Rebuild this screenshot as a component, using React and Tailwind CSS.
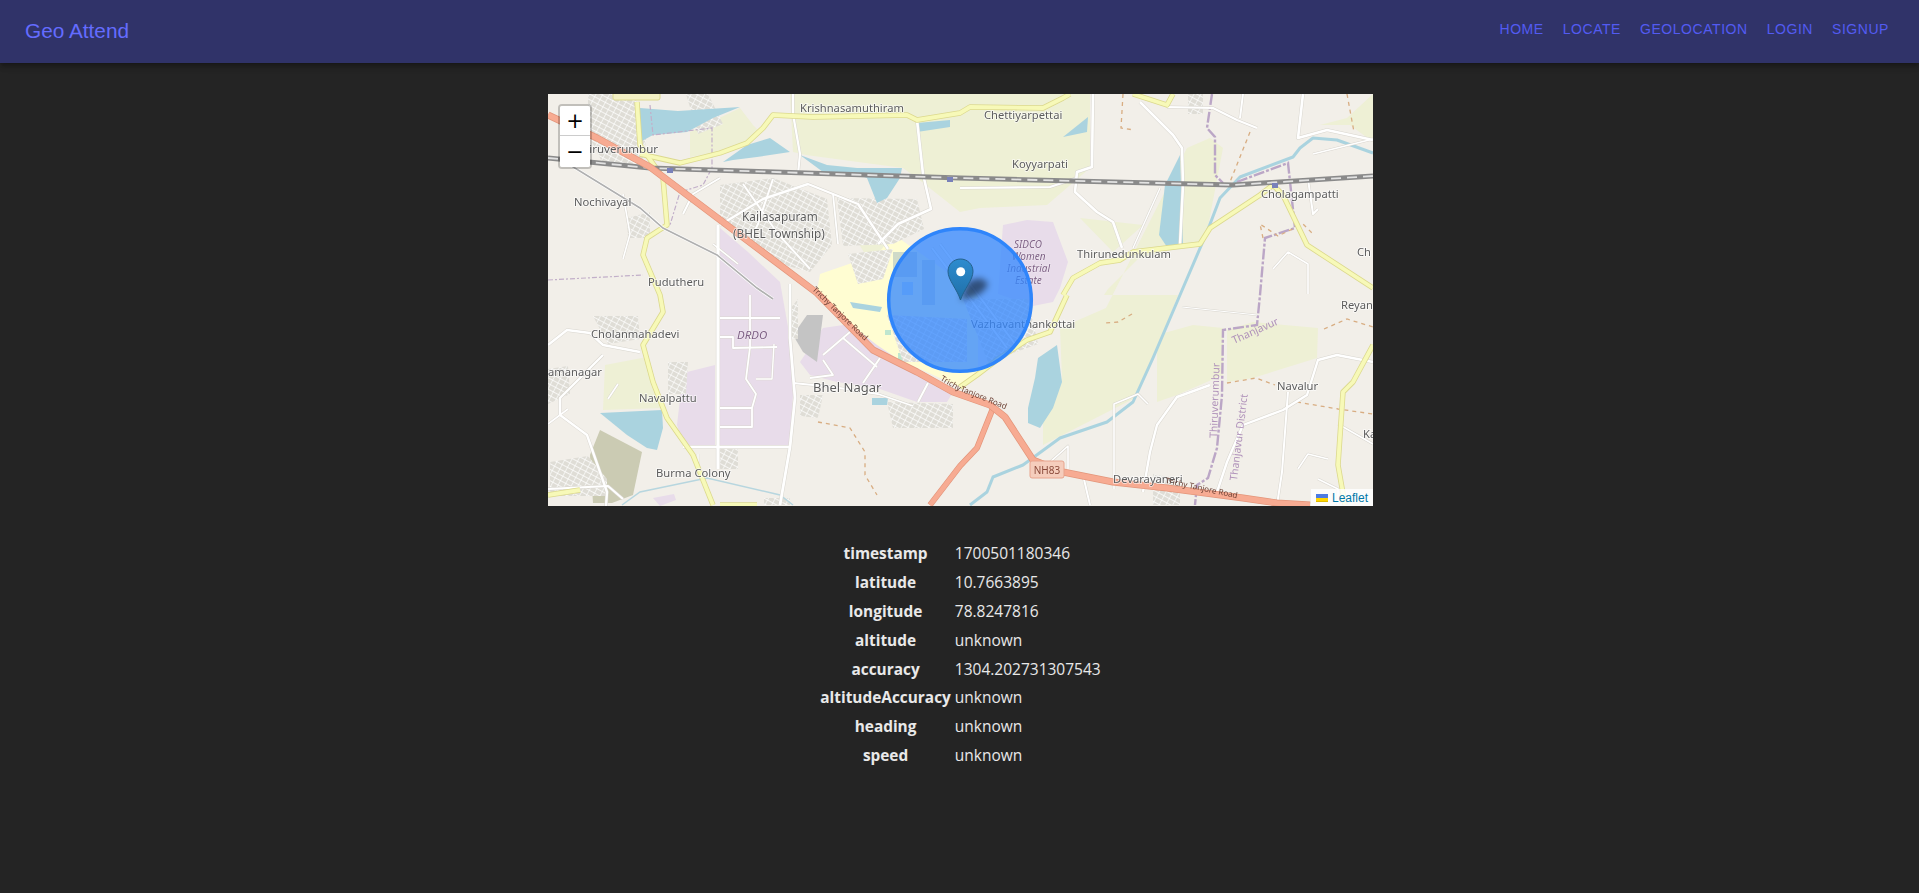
const water = [
  '92,14 130,17 192,13 165,24 139,38 105,41 92,48 90,30',
  '175,68 199,51 222,44 242,58 209,63 185,66',
  '252,61 279,71 309,74 354,74 352,84 339,104 329,109 319,84 305,79 275,78',
  '369,29 402,26 402,33 369,38',
  '515,43 540,23 539,38',
  '632,61 635,151 619,153 611,141 617,91',
  '509,251 514,288 505,314 492,334 480,329 480,314 487,284 490,264',
  '52,319 114,316 115,334 109,356 99,354 79,341',
  '324,304 340,304 339,311 324,311',
  '302,208 334,213 332,218 305,214',
];

const fields = [
  '242,0 245,58 258,61 355,74 369,84 369,0',
  '369,0 412,0 542,0 542,74 499,111 432,114 412,118 369,84',
  '142,38 192,14 205,31 212,38 192,54 142,63',
  '639,54 662,44 675,54 659,138 652,148 590,165 560,195 556,201 630,201 605,264 585,305 495,351 495,315 514,284 512,234 558,214',
  '532,124 595,131 565,158',
  '609,241 645,231 675,234 675,281 629,301 609,308',
  '679,236 705,228 770,234 769,264 705,284 679,288',
  '57,271 99,263 109,294 115,314 55,316',
  '772,31 799,24 825,0 825,48 802,31',
  '320,108 345,125 350,150 320,165 305,140',
];

const purple = [
  '135,279 167,271 167,351 135,351 129,331',
  '172,134 200,158 232,188 242,244 245,301 242,351 172,351',
  '275,234 302,230 329,251 369,278 405,298 399,308 369,308 329,294 289,288 262,281 252,268',
  '455,131 479,126 505,128 520,168 512,194 505,208 485,212 450,200',
  '112,412 128,406 126,400 105,404',
];

const builtUp = [
  '172,91 225,84 279,105 284,151 262,178 240,172 200,150 172,130',
  '289,104 369,105 376,135 345,150 295,152',
  '40,0 85,0 100,30 95,70 55,70 40,40',
  '2,368 40,362 59,385 59,402 2,402',
  '339,308 405,310 405,334 345,334',
  '252,301 275,301 270,324 252,322',
  '79,124 102,118 102,144 80,144',
  '138,0 160,0 175,30 150,40',
  '300,160 345,155 335,185 310,190',
  '640,0 655,0 655,20 640,20',
  '0,275 20,272 22,300 0,310',
  '45,222 90,222 92,245 60,250',
  '120,268 140,268 138,300 120,300',
  '216,404 242,404 242,411 216,411',
  '339,221 419,225 419,268 355,268',
  '415,205 480,205 490,250 440,268',
  '242,215 250,205 250,245 242,245',
  '172,355 190,355 190,375 172,375',
  '605,380 632,385 632,411 605,411',
];

const whiteRoads = [
  [2.6, '545,0 544,73 529,78 527,98 549,118 565,128 574,154'],
  [2.6, '592,8 625,41 634,54 635,91 632,151'],
  [2.2, '619,13 665,14 689,26 709,34'],
  [2, '695,0 692,24'],
  [2.6, '755,0 750,44 779,36 825,46'],
  [2.2, '412,94 502,93 529,84'],
  [2.4, '825,268 789,261 770,266 759,301 735,316 695,331 679,368 669,398'],
  [2, '740,298 734,378 729,411'],
  [2.4, '662,291 629,303 609,331 602,358 595,398'],
  [2, '535,381 542,411'],
  [3.2, '170,131 170,375'],
  [2.6, '135,353 242,353'],
  [2.8, '242,190 242,244 247,304 242,353 232,411'],
  [1.8, '172,224 232,224'],
  [1.8, '172,243 185,243 185,254 229,253'],
  [1.8, '245,289 285,293 330,300 365,312'],
  [1.8, '172,314 204,314 204,333 172,333'],
  [1.8, '202,201 202,253 198,285 208,300 204,314'],
  [1.4, '226,250 224,285 208,285'],
  [2.4, '0,251 19,236 42,239 55,251 92,258'],
  [2.4, '55,261 12,304 12,321 39,341 59,398 58,412'],
  [2.2, '245,0 245,20 252,60 250,80'],
  [2.6, '369,26 375,80 383,115 350,130 330,150'],
  [2.4, '172,131 215,105 260,90 310,110 340,155'],
  [2, '332,264 315,289'],
  [2, '380,289 370,308'],
  [1.8, '275,266 285,281 262,284'],
  [1.8, '295,244 329,273'],
  [1.8, '275,261 302,238'],
  [2, '172,84 145,100 135,120'],
  [2, '760,85 765,120 770,115'],
  [2.2, '0,395 60,392 75,405'],
  [1.4, '612,94 585,154'],
  [1.2, '634,213 709,221'],
  [1.6, '790,411 790,395 770,385'],
  [1.6, '790,330 825,350'],
  [1.6, '765,60 825,45'],
  [1.6, '600,310 590,300 566,310 566,395'],
  [1.6, '725,175 740,158 760,170 760,200'],
  [2, '195,90 230,140 262,175'],
  [2, '225,85 210,130 200,150'],
  [1.8, '285,100 290,150'],
  [1.6, '165,150 190,170'],
  [2, '384,154 459,254'],
  [2, '392,150 467,250'],
  [1.6, '75,100 82,140 75,165'],
  [1.6, '0,330 20,315'],
  [1.6, '70,290 60,305'],
  [1.6, '500,370 520,352 520,375'],
  [1.6, '780,365 760,360 750,375'],
  [1.4, '150,360 150,372'],
];

const yellowRoads = [
  '89,8 92,51 115,84 119,131 99,144 95,161 112,201 115,218 95,251 105,288 119,324 145,361 165,411',
  '92,60 132,69 172,59 199,49 215,34 225,21 265,23 359,21 369,26 412,19 422,13 495,14 515,4 522,0',
  '585,0 619,11 625,0',
  '515,201 525,184 552,169 572,166 585,158 652,150 662,134 712,101 725,91 735,101 759,151 825,194',
  '519,201 502,238 479,246 450,265 429,281 412,293',
  '825,251 805,288 795,298 790,371 797,411',
  '0,401 32,396',
  '172,411 209,411',
];

const boundaries = [
  '664,0 659,34 667,43 667,81 675,89',
  '689,88 740,69 747,134 717,144 712,201 709,231 675,236 674,301 669,354 660,384 649,391 647,411',
];
const thinBoundaries = [
  '102,11 105,41 164,34 164,74 155,91 132,98 122,131',
  '0,186 95,181',
];

const tracks = [
  '270,328 302,334 317,358 317,381 329,401',
  '702,38 682,88',
  '575,0 573,34 586,36',
  '799,0 806,38',
  '679,289 708,284 727,291',
  '749,308 790,315 825,320',
  '776,235 799,225 825,233',
  '584,220 570,228 556,229',
  '715,144 712,130 730,142 755,130 765,140',
];

const labels = [
  { t: 'Thiruverumbur', x: 110, y: 59, anchor: 'end', size: 11.5 },
  { t: 'Nochivayal', x: 26, y: 112, size: 11.2 },
  { t: 'Kailasapuram', x: 194, y: 127, size: 11.8 },
  { t: '(BHEL Township)', x: 185, y: 144, size: 11.8 },
  { t: 'Krishnasamuthiram', x: 252, y: 18, size: 11.2 },
  { t: 'Chettiyarpettai', x: 436, y: 25, size: 11.2 },
  { t: 'Koyyarpati', x: 464, y: 74, size: 11.2 },
  { t: 'Cholagampatti', x: 713, y: 104, size: 11.2 },
  { t: 'Thirunedunkulam', x: 529, y: 164, size: 11.2 },
  { t: 'Pudutheru', x: 100, y: 192, size: 11.2 },
  { t: 'Cholanmahadevi', x: 43, y: 244, size: 11.2 },
  { t: 'amanagar', x: 0, y: 282, size: 11.2 },
  { t: 'Navalpattu', x: 91, y: 308, size: 11.2 },
  { t: 'Bhel Nagar', x: 265, y: 298, size: 13 },
  { t: 'Burma Colony', x: 108, y: 383, size: 11.2 },
  { t: 'Vazhavanthankottai', x: 423, y: 234, size: 11.2 },
  { t: 'Devarayaneri', x: 565, y: 389, size: 11.2 },
  { t: 'Navalur', x: 729, y: 296, size: 11.2 },
  { t: 'Reyan', x: 793, y: 215, size: 11.2 },
  { t: 'Ch', x: 809, y: 162, size: 11.2 },
  { t: 'Ka', x: 815, y: 344, size: 11.2 },
];

const purpleLabels = [
  { t: 'DRDO', x: 189, y: 245, size: 11.5 },
  { t: 'SIDCO', x: 466, y: 154, size: 10 },
  { t: 'Women', x: 464, y: 166, size: 10 },
  { t: 'Industrial', x: 459, y: 178, size: 10 },
  { t: 'Estate', x: 467, y: 190, size: 10 },
];

const geo = [
  ['timestamp', '1700501180346'],
  ['latitude', '10.7663895'],
  ['longitude', '78.8247816'],
  ['altitude', 'unknown'],
  ['accuracy', '1304.202731307543'],
  ['altitudeAccuracy', 'unknown'],
  ['heading', 'unknown'],
  ['speed', 'unknown'],
];

const navItems = ['Home', 'Locate', 'Geolocation', 'Login', 'Signup'];

const mapFont = '"Noto Sans", sans-serif';
const trunk = '0,21 49,44 102,73 269,199 325,256 369,278 405,298 442,311 457,323 485,366 515,378 565,388 619,394 695,404 729,409 762,411';
const trunkBranch = '445,314 429,354 412,372 382,411';
const railway = '0,64 102,74 412,84 685,91 825,82';
const sideRail = '22,71 92,114 115,134 169,161 209,194 225,205';

function MapArt() {
  return (
    <svg viewBox="0 0 825 412" className="block w-full h-full">
      <defs>
        <filter id="tile" x="0" y="0" width="100%" height="100%">
          <feGaussianBlur stdDeviation="0.5" />
        </filter>
        <filter id="shadow" x="-50%" y="-50%" width="200%" height="200%">
          <feGaussianBlur stdDeviation="3" />
        </filter>
        <pattern id="streets" width="6" height="5" patternUnits="userSpaceOnUse" patternTransform="rotate(28)">
          <rect width="6" height="5" fill="#dfddd6" />
          <path d="M0 0H6M0 0V5" stroke="#ffffff" strokeWidth="1.3" fill="none" />
        </pattern>
        <linearGradient id="pin" x1="0" y1="0" x2="0" y2="1">
          <stop offset="0" stopColor="#2e8ccf" />
          <stop offset="1" stopColor="#1f6fa8" />
        </linearGradient>
      </defs>

      <g filter="url(#tile)">
        <rect width="825" height="412" fill="#f2efe9" />
        {fields.map((p) => <polygon key={p} points={p} fill="#eef0d5" />)}
        <polygon points="272,180 330,160 345,140 430,200 430,280 412,293 372,275 325,255 269,197" fill="#fffdd2" />
        <rect x="345" y="158" width="24" height="25" fill="#cfdac8" />
        <rect x="374" y="166" width="13" height="45" fill="#cfdac8" />
        <rect x="337" y="236" width="6" height="5" fill="#bfe6cf" />
        <rect x="350" y="259" width="8" height="9" fill="#bfe6cf" />
        {purple.map((p) => <polygon key={p} points={p} fill="#e8dcea" />)}
        <polygon points="42,361 52,336 94,358 85,401 64,409 45,409" fill="#cbcbb3" />
        <polygon points="245,241 259,221 275,221 269,268 255,258" fill="#c4c4c4" />
        <rect x="62" y="40" width="10" height="9" fill="#c9c9c9" />
        {builtUp.map((p) => <polygon key={p} points={p} fill="url(#streets)" />)}
        {water.map((p) => <polygon key={p} points={p} fill="#aad3df" />)}
        <rect x="354" y="188" width="11" height="13" fill="#c3dde5" />
        <polyline points="825,59 789,46 765,44 752,54 745,63 692,83 672,104 659,138 632,201 605,264 585,308 559,328 512,344 475,371 445,383 439,398 422,411" fill="none" stroke="#aad3df" strokeWidth="3" strokeLinejoin="round" />
        <polyline points="74,411 92,398 159,384 232,401 245,411" fill="none" stroke="#b7d6df" strokeWidth="1.5" />

        {boundaries.map((p) => <polyline key={p} points={p} fill="none" stroke="#bba6c6" strokeWidth="2.4" strokeDasharray="11 2 3 2" />)}
        {thinBoundaries.map((p) => <polyline key={p} points={p} fill="none" stroke="#c2afc9" strokeWidth="1.2" strokeDasharray="5 2 2 2" />)}
        {tracks.map((p) => <polyline key={p} points={p} fill="none" stroke="#d8ad82" strokeWidth="1.3" strokeDasharray="4 4" />)}

        {whiteRoads.map(([w, p]) => <polyline key={p} points={p} fill="none" stroke="#d9d6cf" strokeWidth={w + 1} strokeLinejoin="round" />)}
        {whiteRoads.map(([w, p]) => <polyline key={p} points={p} fill="none" stroke="#ffffff" strokeWidth={w} strokeLinejoin="round" />)}

        {yellowRoads.map((p) => <polyline key={p} points={p} fill="none" stroke="#dcd98e" strokeWidth="5.4" strokeLinejoin="round" />)}
        {yellowRoads.map((p) => <polyline key={p} points={p} fill="none" stroke="#f7f9b8" strokeWidth="3.8" strokeLinejoin="round" />)}

        <polyline points={sideRail} fill="none" stroke="#ffffff" strokeWidth="3" />
        <polyline points={sideRail} fill="none" stroke="#b0b0b0" strokeWidth="1.6" />
        <polyline points={railway} fill="none" stroke="#8a8a8a" strokeWidth="5" />
        <polyline points={railway} fill="none" stroke="#e2e2e2" strokeWidth="1.8" strokeDasharray="10 6" />
        <rect x="119" y="74" width="6" height="5" fill="#7981b9" />
        <rect x="399" y="83" width="6" height="5" fill="#7981b9" />
        <rect x="724" y="89" width="6" height="5" fill="#7981b9" />

        <polyline points={trunkBranch} fill="none" stroke="#e3957a" strokeWidth="6" strokeLinejoin="round" />
        <polyline points={trunkBranch} fill="none" stroke="#f7ab92" strokeWidth="4.6" strokeLinejoin="round" />
        <polyline points={trunk} fill="none" stroke="#e3957a" strokeWidth="7" strokeLinejoin="round" />
        <polyline points={trunk} fill="none" stroke="#f7ab92" strokeWidth="5.6" strokeLinejoin="round" />

        <rect x="65" y="-4" width="47" height="10" rx="2" fill="#f3f0c4" stroke="#dcd98e" />
        <rect x="482" y="367" width="34" height="17" rx="2" fill="#f5cdbc" stroke="#e8a48d" />
        <text x="499" y="379.5" textAnchor="middle" fontSize="10" fontFamily={mapFont} fill="#8a4a3a">NH83</text>

        <g fontFamily={mapFont} fill="#5c5c5c" stroke="#ffffff" strokeOpacity="0.7" strokeWidth="1.6" paintOrder="stroke">
          {labels.map((l) => (
            <text key={l.t} x={l.x} y={l.y} fontSize={l.size} textAnchor={l.anchor || 'start'}>{l.t}</text>
          ))}
        </g>
        <g fontFamily={mapFont} fontStyle="italic" fill="#7d5f84" stroke="#ffffff" strokeOpacity="0.4" strokeWidth="1" paintOrder="stroke">
          {purpleLabels.map((l) => (
            <text key={l.t} x={l.x} y={l.y} fontSize={l.size}>{l.t}</text>
          ))}
        </g>
        <g fontFamily={mapFont} fill="#b092ba" fontSize="10.5">
          <text transform="translate(686 250) rotate(-24)">Thanjavur</text>
          <text transform="translate(669 344) rotate(-88)">Thiruverumbur</text>
          <text transform="translate(689 387) rotate(-83)">Thanjavur District</text>
        </g>
        <g fontFamily={mapFont} fill="#6b3f33" fontSize="8">
          <text transform="translate(264 196) rotate(44)">Trichy Tanjore Road</text>
          <text transform="translate(412 297) rotate(22)">Tanjore Road</text>
          <text transform="translate(617 389) rotate(12)">Trichy Tanjore Road</text>
          <text transform="translate(392 286) rotate(30)">Trichy</text>
        </g>
      </g>

      <circle cx="412" cy="206" r="71.3" fill="#3388ff" fillOpacity="0.76" stroke="#2f85fb" strokeWidth="3.5" />

      <path d="M412 206 L420 188 Q434 180 440 190 Q436 200 422 204 Z" fill="#000000" fillOpacity="0.5" filter="url(#shadow)" />
      <path d="M412.5 206 C409 195 400 186 400 177.5 C400 170 406 165 412.5 165 C419 165 425 170 425 177.5 C425 186 416 195 412.5 206 Z" fill="url(#pin)" stroke="#24618c" strokeWidth="1" />
      <circle cx="412.7" cy="177.7" r="4.5" fill="#ffffff" />
    </svg>
  );
}

function ZoomControl() {
  return (
    <div className="absolute left-[10px] top-[10px] w-[34px] rounded-[4px] border-2 border-black/20 bg-clip-padding">
      <div className="flex h-[30px] w-[30px] items-center justify-center rounded-t-[2px] border-b border-[#cccccc] bg-white pt-[2px] text-[21px] text-black font-['DejaVu_Sans',sans-serif]">+</div>
      <div className="flex h-[31px] w-[30px] items-center justify-center rounded-b-[2px] bg-white pt-[2px] text-[21px] text-black font-['DejaVu_Sans',sans-serif]">−</div>
    </div>
  );
}

function Attribution() {
  return (
    <div className="absolute bottom-0 right-0 flex h-[17px] items-center gap-1 bg-white/80 px-[5px] text-[12px] text-[#0078a8] font-['Liberation_Sans',sans-serif]">
      <svg width="12" height="8" viewBox="0 0 12 8">
        <path fill="#4c7be1" d="M0 0h12v4H0z" />
        <path fill="#ffd500" d="M0 4h12v3H0z" />
        <path fill="#e0bc00" d="M0 7h12v1H0z" />
      </svg>
      <span>Leaflet</span>
    </div>
  );
}

export default function App() {
  return (
    <div className="min-h-[893px] bg-[#242424] text-white/90 font-['Open_Sans',sans-serif]">
      <header className="relative flex h-[63px] items-center justify-between bg-[#303369] pl-[25px] pr-[20.5px] shadow-[0_2px_4px_-1px_rgba(0,0,0,0.2),0_4px_5px_0_rgba(0,0,0,0.14),0_1px_10px_0_rgba(0,0,0,0.12)] font-['Liberation_Sans',sans-serif]">
        <a className="pb-[2px] text-[20.8px] text-[#646cff]">Geo Attend</a>
        <nav className="flex">
          {navItems.map((item) => (
            <a key={item} className="px-[9.5px] pb-[5px] text-[14px] uppercase tracking-[0.55px] text-[#535bf2]">{item}</a>
          ))}
        </nav>
      </header>

      <main className="flex flex-col items-center pt-[31px]">
        <div className="relative h-[412px] w-[825px] translate-x-px overflow-hidden">
          <MapArt />
          <ZoomControl />
          <Attribution />
        </div>

        <table className="ml-[2px] mt-[32px] border-separate border-spacing-[2px] text-[15.4px]">
          <tbody>
            {geo.map(([key, value]) => (
              <tr key={key}>
                <th className={key === 'accuracy' ? 'px-px pt-px pb-0 text-center font-bold leading-[25px]' : 'p-px text-center font-bold leading-[25px]'}>{key}</th>
                <td className={key === 'accuracy' ? 'px-px pt-px pb-0 text-[15.5px] leading-[25px]' : 'p-px text-[15.5px] leading-[25px]'}>{value}</td>
              </tr>
            ))}
          </tbody>
        </table>
      </main>
    </div>
  );
}
